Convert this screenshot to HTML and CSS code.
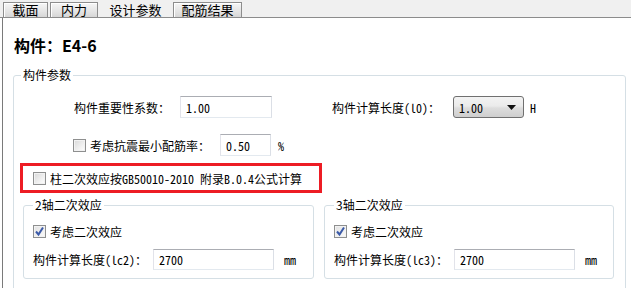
FILE: index.html
```html
<!DOCTYPE html>
<html>
<head>
  <title>设计参数</title>
  <link rel="stylesheet" href="styles.css">
</head>
<body>
  <div class="tabs">
    <div class="tab tab-1">截面</div>
    <div class="tab tab-2">内力</div>
    <div class="tab active">设计参数</div>
    <div class="tab tab-4">配筋结果</div>
  </div>

  <div class="panel">
    <h1 class="title">构件：E4-6</h1>

    <fieldset class="group main-group">
      <legend>构件参数</legend>

      <div class="row row-first">
        <span class="label l-importance">构件重要性系数：</span>
        <input class="field w-importance" type="text" value="1.00" readonly>
        <span class="label l-length">构件计算长度(l0)：</span>
        <div class="select">
          <span>1.00</span>
          <svg width="9" height="5" viewBox="0 0 9 5"><path d="M0 0h9L4.5 5z" fill="#111"/></svg>
        </div>
        <span class="unit unit-h">H</span>
      </div>

      <div class="row row-second">
        <span class="check"></span>
        <span class="label l-seismic">考虑抗震最小配筋率：</span>
        <input class="field w-seismic" type="text" value="0.50" readonly>
        <span class="unit unit-pct">%</span>
      </div>

      <div class="highlight">
        <span class="check"></span>
        <span class="label">柱二次效应按GB50010-2010 附录B.0.4公式计算</span>
      </div>

      <div class="axis-groups">
        <fieldset class="group sub-group">
          <legend>2轴二次效应</legend>
          <div class="row check-row">
            <span class="check checked">
              <svg width="11" height="11" viewBox="0 0 11 11"><path d="M2 5.5l2.5 3L9 1.5" fill="none" stroke="#3b5aa8" stroke-width="2"/></svg>
            </span>
            <span class="label">考虑二次效应</span>
          </div>
          <div class="row len-row">
            <span class="label l-lc">构件计算长度(lc2)：</span>
            <input class="field w-lc" type="text" value="2700" readonly>
            <span class="unit unit-mm">mm</span>
          </div>
        </fieldset>

        <fieldset class="group sub-group sub-right">
          <legend>3轴二次效应</legend>
          <div class="row check-row">
            <span class="check checked">
              <svg width="11" height="11" viewBox="0 0 11 11"><path d="M2 5.5l2.5 3L9 1.5" fill="none" stroke="#3b5aa8" stroke-width="2"/></svg>
            </span>
            <span class="label">考虑二次效应</span>
          </div>
          <div class="row len-row">
            <span class="label l-lc">构件计算长度(lc3)：</span>
            <input class="field w-lc" type="text" value="2700" readonly>
            <span class="unit unit-mm">mm</span>
          </div>
        </fieldset>
      </div>
    </fieldset>
  </div>
</body>
</html>
```

FILE: styles.css
```css
body {
  margin: 0;
  width: 631px;
  height: 288px;
  overflow: hidden;
  background-color: #fff;
  font-family: "Noto Sans Mono CJK SC", "Noto Sans CJK SC", monospace;
  font-size: 12px;
  color: #000;
}

/* tab strip */
.tabs {
  height: 17px;
  display: flex;
  align-items: flex-end;
  padding-left: 3px;
  background-color: #f0f0f0;
  border-bottom: 1px solid #8c8c8c;
  font-family: "Noto Sans CJK SC", sans-serif;
  font-size: 13px;
}

.tab {
  height: 15px;
  line-height: 14px;
  box-sizing: border-box;
  text-align: center;
  border: 1px solid #8d8d8d;
  border-bottom: none;
  box-shadow: inset 1px 1px 0 #fff;
  background: linear-gradient(#f6f6f6, #e4e4e4 60%, #d6d6d6);
  margin-right: 2px;
}

.tab-1 { width: 45px; }
.tab-2 { width: 48px; }
.tab-4 { width: 69px; }

.tab.active {
  width: 71px;
  border: none;
  box-shadow: none;
  background: #f0f0f0;
  line-height: 15px;
}

/* main panel */
.panel {
  margin-left: 2px;
  height: 270px;
  border-left: 1px solid #7a7a7a;
}

.title {
  margin: 0;
  padding-top: 17px;
  padding-left: 11px;
  height: 20px;
  line-height: 20px;
  font-family: "Noto Sans CJK SC", sans-serif;
  font-size: 16px;
  font-weight: bold;
}

/* group boxes */
.group {
  margin: 0;
  padding: 0;
  min-inline-size: 0;
  border: 1px solid #d5dfe5;
  border-radius: 3px;
}

.group legend {
  margin-left: 7px;
  padding: 0 2px;
  height: 14px;
  line-height: 14px;
  font-family: "Noto Sans CJK SC", sans-serif;
}

.main-group {
  margin-top: 13px;
  margin-left: 10px;
  width: 611px;
  padding-bottom: 20px;
}

.row {
  display: flex;
  align-items: center;
}

.label {
  font-family: "Noto Sans Mono CJK SC", "Noto Sans CJK SC", sans-serif;
  white-space: nowrap;
}

.field {
  box-sizing: border-box;
  height: 22px;
  margin: 0;
  padding: 0 5px;
  border: 1px solid;
  border-color: #abadb3 #dbdfe6 #e3e9ef #e2e3ea;
  font-family: "Noto Sans Mono CJK SC", "Liberation Mono", monospace;
  font-size: 12px;
  color: #000;
  outline: none;
}

.unit {
  font-family: "Noto Sans Mono CJK SC", "Liberation Mono", monospace;
  color: #000;
}

.row-first {
  margin-top: 14px;
  margin-left: 60px;
}

.l-importance { width: 106px; }
.w-importance { width: 92px; }
.l-length { width: 121px; margin-left: 60px; }
.unit-h { margin-left: 6px; }

.select {
  box-sizing: border-box;
  width: 71px;
  height: 22px;
  display: flex;
  align-items: center;
  justify-content: space-between;
  padding: 0 7px 0 5px;
  border: 1px solid #707070;
  border-radius: 3px;
  background: linear-gradient(#f3f3f3, #ebebeb 45%, #dddddd 55%, #cfcfcf);
  font-family: "Noto Sans Mono CJK SC", "Liberation Mono", monospace;
}

.row-second {
  margin-top: 16px;
  margin-left: 59px;
}

.l-seismic { width: 130px; }
.w-seismic { width: 51px; }
.unit-pct { margin-left: 7px; }

/* check boxes */
.check {
  box-sizing: border-box;
  width: 13px;
  height: 13px;
  margin-right: 4px;
  flex-shrink: 0;
  display: flex;
  align-items: center;
  justify-content: center;
  border: 1px solid #8e8f8f;
  background: linear-gradient(135deg, #d8d8d8, #f4f4f4 70%, #fff);
  box-shadow: inset 0 0 0 1px #f2f2f2;
}

.check.checked {
  background: linear-gradient(135deg, #e2e2e2, #fafafa);
}

/* red highlight */
.highlight {
  box-sizing: border-box;
  width: 302px;
  height: 30px;
  margin-top: 7px;
  margin-left: 6px;
  padding-left: 10px;
  display: flex;
  align-items: center;
  border: 3px solid #ed1c24;
}

/* axis sub groups */
.axis-groups {
  display: flex;
  margin-top: 5px;
  margin-left: 9px;
}

.sub-group {
  width: 291px;
  padding: 0 0 8px 9px;
  box-sizing: border-box;
}

.sub-group legend {
  margin-left: 0;
}

.sub-right {
  width: 290px;
  margin-left: 10px;
}

.check-row {
  margin-top: 11px;
  height: 16px;
}

.len-row {
  margin-top: 10px;
}

.l-lc { width: 120px; }
.w-lc { width: 121px; height: 21px; }
.unit-mm { margin-left: 10px; }
```
